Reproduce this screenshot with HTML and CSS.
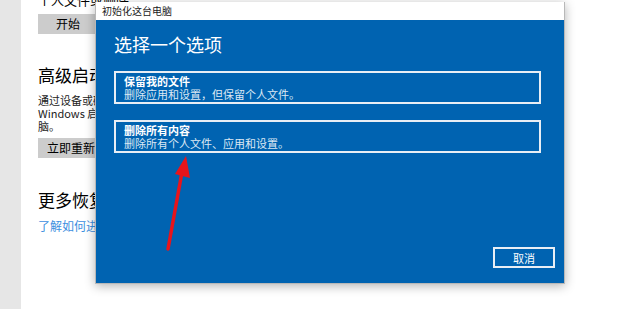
FILE: index.html
```html
<!DOCTYPE html>
<html lang="zh-CN">
<head>
    <meta charset="UTF-8">
    <title>恢复</title>
    <link rel="stylesheet" href="styles.css">
</head>
<body>
    <div class="page">
        <div class="sidebar"></div>
        <div class="settings">
            <p class="cut-line">个人文件或删除</p>
            <button class="btn btn-start">开始</button>

            <h3>高级启动</h3>
            <p class="desc">通过设备或磁盘启动<br>Windows 启动设置<br>脑。</p>
            <button class="btn btn-restart">立即重新启动</button>

            <h3 class="more">更多恢复选项</h3>
            <a class="link" href="#">了解如何进行全新安装</a>
        </div>
    </div>

    <div class="dialog">
        <div class="title-bar">初始化这台电脑</div>
        <div class="dialog-body">
            <h2>选择一个选项</h2>
            <div class="option">
                <strong>保留我的文件</strong>
                <span>删除应用和设置，但保留个人文件。</span>
            </div>
            <div class="option">
                <strong>删除所有内容</strong>
                <span>删除所有个人文件、应用和设置。</span>
            </div>
            <div class="actions">
                <button class="cancel">取消</button>
            </div>
        </div>
    </div>

    <svg class="arrow" width="620" height="309" viewBox="0 0 620 309">
        <line x1="168" y1="249" x2="182" y2="172" stroke="#e8141b" stroke-width="3.5" stroke-linecap="round"/>
        <polygon points="186,156 175,174 190,178" fill="#e8141b"/>
    </svg>
</body>
</html>
```

FILE: styles.css
```css
body {
    margin: 0;
    font-family: "Noto Sans CJK SC", "Noto Sans", sans-serif;
    background: #fff;
    overflow: hidden;
}
.page {
    display: flex;
    height: 309px;
}
.sidebar {
    width: 21px;
    background: #e6e6e6;
}
.settings {
    padding-left: 17px;
    color: #000;
}
.cut-line {
    margin: -9px 0 0;
    font-size: 13px;
    line-height: 18px;
    white-space: nowrap;
}
.btn {
    display: block;
    width: 120px;
    height: 20px;
    padding: 0 0 0 9px;
    border: none;
    background: #cccccc;
    font-family: inherit;
    font-size: 12px;
    line-height: 20px;
    text-align: left;
}
.btn-start {
    margin-top: 5px;
    padding-left: 18px;
}
h3 {
    margin: 30px 0 0;
    font-size: 17px;
    font-weight: normal;
    line-height: 22px;
}
.desc {
    margin: 8px 0 0;
    font-size: 11px;
    line-height: 13px;
    color: #222;
    white-space: nowrap;
}
.btn-restart {
    margin-top: 5px;
}
.more {
    margin-top: 31px;
}
.link {
    display: block;
    margin-top: 7px;
    font-size: 12px;
    line-height: 16px;
    color: #3d8fe0;
    text-decoration: none;
}

.dialog {
    position: absolute;
    left: 95px;
    top: 2px;
    width: 470px;
    height: 282px;
    box-shadow: 0 2px 10px rgba(0, 0, 0, 0.3);
    border: 1px solid #b8b8b8;
    border-top: none;
    box-sizing: border-box;
    display: flex;
    flex-direction: column;
}
.title-bar {
    height: 18px;
    background: #fff;
    font-size: 10px;
    line-height: 18px;
    padding-left: 6px;
    color: #222;
}
.dialog-body {
    flex: 1;
    background: #0063b1;
    padding: 11px 23px 0 18px;
    color: #fff;
    display: flex;
    flex-direction: column;
}
h2 {
    margin: 0 0 14px;
    font-size: 18px;
    font-weight: normal;
    line-height: 26px;
}
.option {
    border: 2px solid #e8eef5;
    height: 33px;
    box-sizing: border-box;
    padding: 1px 8px;
    display: flex;
    flex-direction: column;
    justify-content: center;
    font-size: 11px;
    line-height: 13px;
    margin-bottom: 16px;
}
.option strong {
    font-weight: bold;
}
.option span {
    color: #dce8f4;
}
.actions {
    margin-top: auto;
    margin-bottom: 15px;
    display: flex;
    justify-content: flex-end;
    margin-right: -14px;
}
.cancel {
    width: 62px;
    height: 21px;
    background: #0063b1;
    border: 2px solid #e8eef5;
    color: #fff;
    font-family: inherit;
    font-size: 11px;
    padding: 0;
}
.arrow {
    position: absolute;
    left: 0;
    top: 0;
}
```
